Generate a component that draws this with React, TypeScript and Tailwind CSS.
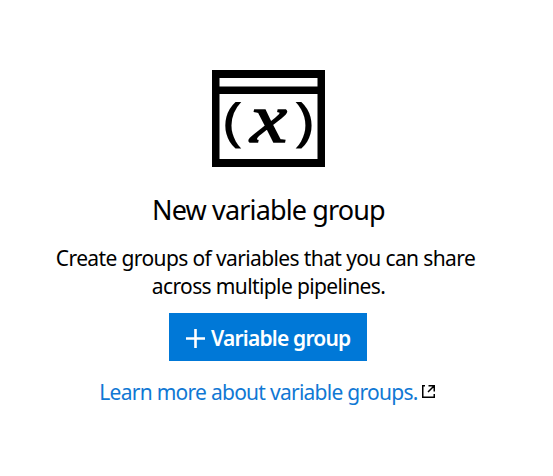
function VariableGroupIcon() {
  return (
    <svg width="113" height="97" viewBox="0 0 113 97" role="img" aria-label="Variable group">
      <path fillRule="evenodd" d="M0 0H113V97H0ZM7.500 8V16.500H105.500V8ZM7.500 24V89H105.500V24Z" fill="#000" />
      <g className="font-['Noto_Sans',sans-serif]" fill="#000" fontSize="53.500" textAnchor="middle">
        <text transform="translate(21 70) scale(1.300 1)">(</text>
        <text transform="translate(92 70) scale(1.300 1)">)</text>
      </g>
      <text
        className="font-['Liberation_Serif',serif]"
        transform="translate(56.500 72) scale(1.200 1)"
        fontSize="69"
        fontStyle="italic"
        textAnchor="middle"
        stroke="#000"
        strokeWidth="1.500"
      >
        x
      </text>
    </svg>
  );
}

export default function App() {
  return (
    <main className="flex h-[476px] w-[553px] flex-col items-center bg-white pr-[16px] pt-[70px] font-['Noto_Sans',sans-serif] text-black">
      <VariableGroupIcon />
      <h1 className="mt-[25px] whitespace-nowrap text-[27px] font-normal leading-[36px] tracking-[-0.86px]">New variable group</h1>
      <p className="mt-[16px] whitespace-nowrap text-center text-[21px] leading-[28px] tracking-[-0.62px]">
        <span className="mr-[6px]">Create groups of variables that you can share</span>
        <br />
        across multiple pipelines.
      </p>
      <button className="mr-px mt-[13px] flex h-[48px] w-[198px] items-center whitespace-nowrap bg-[#0078d7] pl-[17px] text-[21px] font-semibold tracking-[-0.8px] text-white">
        <svg width="19" height="19" viewBox="0 0 19 19" className="mr-[6px] mt-[2px] shrink-0">
          <path d="M9.500 0V19M0 9.500H19" stroke="currentColor" strokeWidth="2.600" />
        </svg>
        <span className="pt-[3px]">Variable group</span>
      </button>
      <a className="mt-[17px] flex items-center whitespace-nowrap pr-[3px] text-[21px] leading-[28px] tracking-[-0.73px] text-[#1078d4]">
        <span>Learn more about variable groups.</span>
        <svg width="13" height="13" viewBox="0 0 13 13" fill="none" stroke="#000" strokeWidth="1.500" className="mb-[2px] ml-[4px]">
          <path d="M3 .75H.75V12.250H12.250V9M6.500 .75H12.250V6.500M12 1L6 7" />
        </svg>
      </a>
    </main>
  );
}
